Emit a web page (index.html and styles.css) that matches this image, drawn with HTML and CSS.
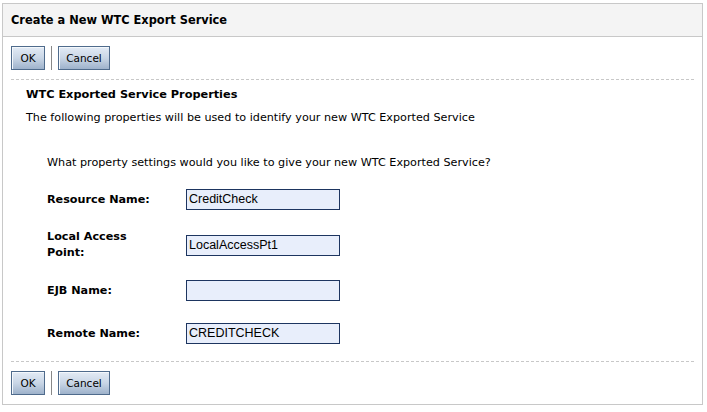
FILE: index.html
```html
<!DOCTYPE html>
<html>
<head>
<meta charset="utf-8">
<link rel="stylesheet" href="styles.css">
</head>
<body>
<div class="panel">
  <div class="panel-header">Create a New WTC Export Service</div>
  <div class="toolbar">
    <button class="btn btn-ok">OK</button>
    <span class="sep"></span>
    <button class="btn btn-cancel">Cancel</button>
  </div>
  <div class="dash"></div>
  <div class="section">
    <div class="section-title">WTC Exported Service Properties</div>
    <div class="section-desc">The following properties will be used to identify your new WTC Exported Service</div>
    <div class="intro">What property settings would you like to give your new WTC Exported Service?</div>
    <div class="form">
      <div class="row r1">
        <label class="lbl">Resource Name:</label>
        <div class="field">CreditCheck</div>
      </div>
      <div class="row r2">
        <label class="lbl">Local Access Point:</label>
        <div class="field">LocalAccessPt1</div>
      </div>
      <div class="row r3">
        <label class="lbl">EJB Name:</label>
        <div class="field"></div>
      </div>
      <div class="row r4">
        <label class="lbl">Remote Name:</label>
        <div class="field">CREDITCHECK</div>
      </div>
    </div>
  </div>
  <div class="dash dash-bottom"></div>
  <div class="toolbar toolbar-bottom">
    <button class="btn btn-ok">OK</button>
    <span class="sep"></span>
    <button class="btn btn-cancel">Cancel</button>
  </div>
</div>
</body>
</html>
```

FILE: styles.css
```css
html, body {
  margin: 0;
  padding: 0;
  background: #ffffff;
}
body {
  font-family: "DejaVu Sans", Verdana, sans-serif;
  font-size: 11.2px;
  color: #000;
}
.panel {
  margin: 3px 0 0 2px;
  width: 699px;
  height: 400px;
  border: 1px solid #c8c8c8;
  background: #fff;
  display: flex;
  flex-direction: column;
}
.panel-header {
  height: 32px;
  background: #f4f4f4;
  border-bottom: 1px solid #c8c8c8;
  padding-left: 8px;
  font-weight: bold;
  font-size: 11.4px;
  line-height: 32px;
}
.toolbar {
  display: flex;
  align-items: center;
  padding: 9px 0 0 8px;
  height: 24px;
}
.btn {
  height: 24px;
  margin: 0;
  padding: 0;
  border: 1px solid #4f6b8c;
  background: linear-gradient(#e3ebf5 0%, #c9d6e6 50%, #9eb2cb 100%);
  font-family: "DejaVu Sans", Verdana, sans-serif;
  font-size: 10.5px;
  color: #000;
  box-shadow: inset 1px 1px 0 #f4f8fc;
}
.btn-ok { width: 34px; }
.btn-cancel { width: 52px; }
.sep {
  width: 1px;
  height: 24px;
  background: #888;
  margin: 0 6px 0 6px;
}
.dash {
  margin: 9px 8px 0 8px;
  border-top: 1px dashed #c8c8c8;
  height: 0;
}
.section {
  padding-left: 23px;
}
.section-title {
  margin-top: 8px;
  font-weight: bold;
  font-size: 11.3px;
  line-height: 14px;
}
.section-desc {
  margin-top: 9px;
  line-height: 14px;
}
.intro {
  margin-top: 31px;
  padding-left: 21px;
  line-height: 14px;
}
.form {
  padding-left: 21px;
  margin-top: 19px;
}
.row {
  display: flex;
  align-items: center;
}
.r2 { margin-top: 19px; }
.r3 { margin-top: 19px; }
.r4 { margin-top: 22px; }
.lbl {
  width: 139px;
  font-weight: bold;
  font-size: 11.2px;
  line-height: 16px;
  padding-right: 30px;
  box-sizing: border-box;
}
.field {
  width: 150px;
  height: 19px;
  border: 1px solid #1d3560;
  background: #e8eefb;
  font-family: "Liberation Sans", Arial, sans-serif;
  font-size: 12.5px;
  line-height: 19px;
  padding-left: 2px;
  box-sizing: content-box;
}
.dash-bottom {
  margin-top: auto;
}
.toolbar-bottom {
  padding-top: 9px;
  margin-bottom: 9px;
}
```
